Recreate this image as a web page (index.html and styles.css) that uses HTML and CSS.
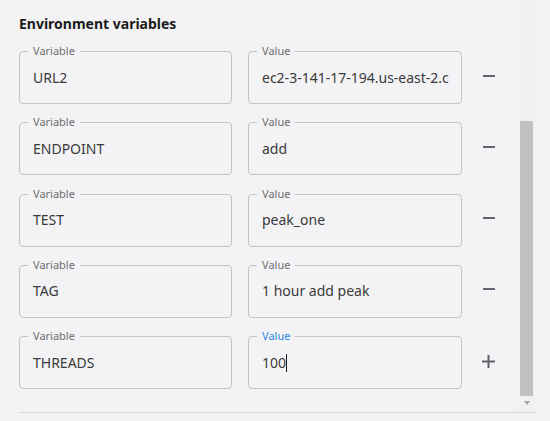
FILE: index.html
```html
<!DOCTYPE html>
<html lang="en">
<head>
<meta charset="utf-8">
<title>Environment variables</title>
<link rel="stylesheet" href="styles.css">
</head>
<body>
<div class="panel">
  <div class="content">
    <h2 class="title">Environment variables</h2>
    <div class="rows">
      <div class="row">
        <div class="field"><span class="label">Variable</span><div class="input">URL2</div></div>
        <div class="field"><span class="label">Value</span><div class="input">ec2-3-141-17-194.us-east-2.c</div></div>
        <button class="icon-btn" aria-label="Remove"><svg width="12" height="12" viewBox="0 0 12 12"><path d="M0 6h12" stroke="currentColor" stroke-width="2"/></svg></button>
      </div>
      <div class="row">
        <div class="field"><span class="label">Variable</span><div class="input">ENDPOINT</div></div>
        <div class="field"><span class="label">Value</span><div class="input">add</div></div>
        <button class="icon-btn" aria-label="Remove"><svg width="12" height="12" viewBox="0 0 12 12"><path d="M0 6h12" stroke="currentColor" stroke-width="2"/></svg></button>
      </div>
      <div class="row">
        <div class="field"><span class="label">Variable</span><div class="input">TEST</div></div>
        <div class="field"><span class="label">Value</span><div class="input">peak_one</div></div>
        <button class="icon-btn" aria-label="Remove"><svg width="12" height="12" viewBox="0 0 12 12"><path d="M0 6h12" stroke="currentColor" stroke-width="2"/></svg></button>
      </div>
      <div class="row">
        <div class="field"><span class="label">Variable</span><div class="input">TAG</div></div>
        <div class="field"><span class="label">Value</span><div class="input">1 hour add peak</div></div>
        <button class="icon-btn" aria-label="Remove"><svg width="12" height="12" viewBox="0 0 12 12"><path d="M0 6h12" stroke="currentColor" stroke-width="2"/></svg></button>
      </div>
      <div class="row">
        <div class="field"><span class="label">Variable</span><div class="input">THREADS</div></div>
        <div class="field focused"><span class="label">Value</span><div class="input">100<span class="caret"></span></div></div>
        <button class="icon-btn plus" aria-label="Add"><svg width="13" height="13" viewBox="0 0 13 13"><path d="M0 6.5h13M6.5 0v13" stroke="currentColor" stroke-width="2"/></svg></button>
      </div>
    </div>
  </div>
  <div class="scrollbar">
    <div class="thumb"></div>
    <div class="arrow"></div>
  </div>
</div>
<div class="divider"></div>
</body>
</html>
```
FILE: styles.css
```css
html, body {
  margin: 0;
  padding: 0;
  background: #f3f3f5;
}
body {
  font-family: "Noto Sans", "Open Sans", sans-serif;
  color: #3a3a3a;
  width: 550px;
  height: 421px;
  overflow: hidden;
}
.panel {
  display: flex;
  width: 535px;
  height: 412px;
}
.content {
  width: 518px;
  padding: 14px 0 0 19px;
  box-sizing: border-box;
}
.title {
  margin: 0;
  font-size: 14px;
  line-height: 20px;
  font-weight: 700;
  color: #1b1b1b;
}
.rows {
  display: flex;
  flex-direction: column;
  gap: 18.25px;
  margin-top: 17px;
}
.row {
  display: flex;
  align-items: center;
}
.field {
  position: relative;
  width: 213px;
  height: 53px;
  border: 1px solid #c4c4c6;
  border-radius: 4px;
  box-sizing: border-box;
  margin-right: 16px;
  display: flex;
  align-items: center;
}
.field + .field {
  width: 214px;
  margin-right: 0;
}
.label {
  position: absolute;
  top: -8px;
  left: 8px;
  padding: 0 5px;
  background: #f3f3f5;
  font-size: 11px;
  line-height: 14px;
  color: #6e6e70;
}
.focused .label {
  color: #2b88e6;
}
.input {
  padding: 0 13px;
  font-size: 14px;
  line-height: 20px;
  white-space: nowrap;
  overflow: hidden;
  display: flex;
  align-items: center;
  color: #3a3a3a;
}
.caret {
  display: inline-block;
  width: 1px;
  height: 18px;
  background: #1a1a1a;
}
.icon-btn {
  border: 0;
  background: none;
  padding: 0;
  margin: -4px 0 0 21px;
  width: 12px;
  height: 12px;
  color: #5f6470;
  display: flex;
}
.icon-btn.plus {
  width: 13px;
  height: 13px;
  margin: -3px 0 0 20px;
}
.scrollbar {
  width: 17px;
  height: 412px;
  background: #f1f1f1;
  display: flex;
  flex-direction: column;
  align-items: center;
}
.thumb {
  width: 13px;
  height: 275px;
  margin-top: 121px;
  background: #c1c1c1;
}
.arrow {
  margin-top: 5px;
  width: 0;
  height: 0;
  border-left: 3.5px solid transparent;
  border-right: 3.5px solid transparent;
  border-top: 4px solid #a3a3a3;
}
.divider {
  margin-left: 19px;
  width: 516px;
  height: 1px;
  background: #d6d6d8;
}
```
